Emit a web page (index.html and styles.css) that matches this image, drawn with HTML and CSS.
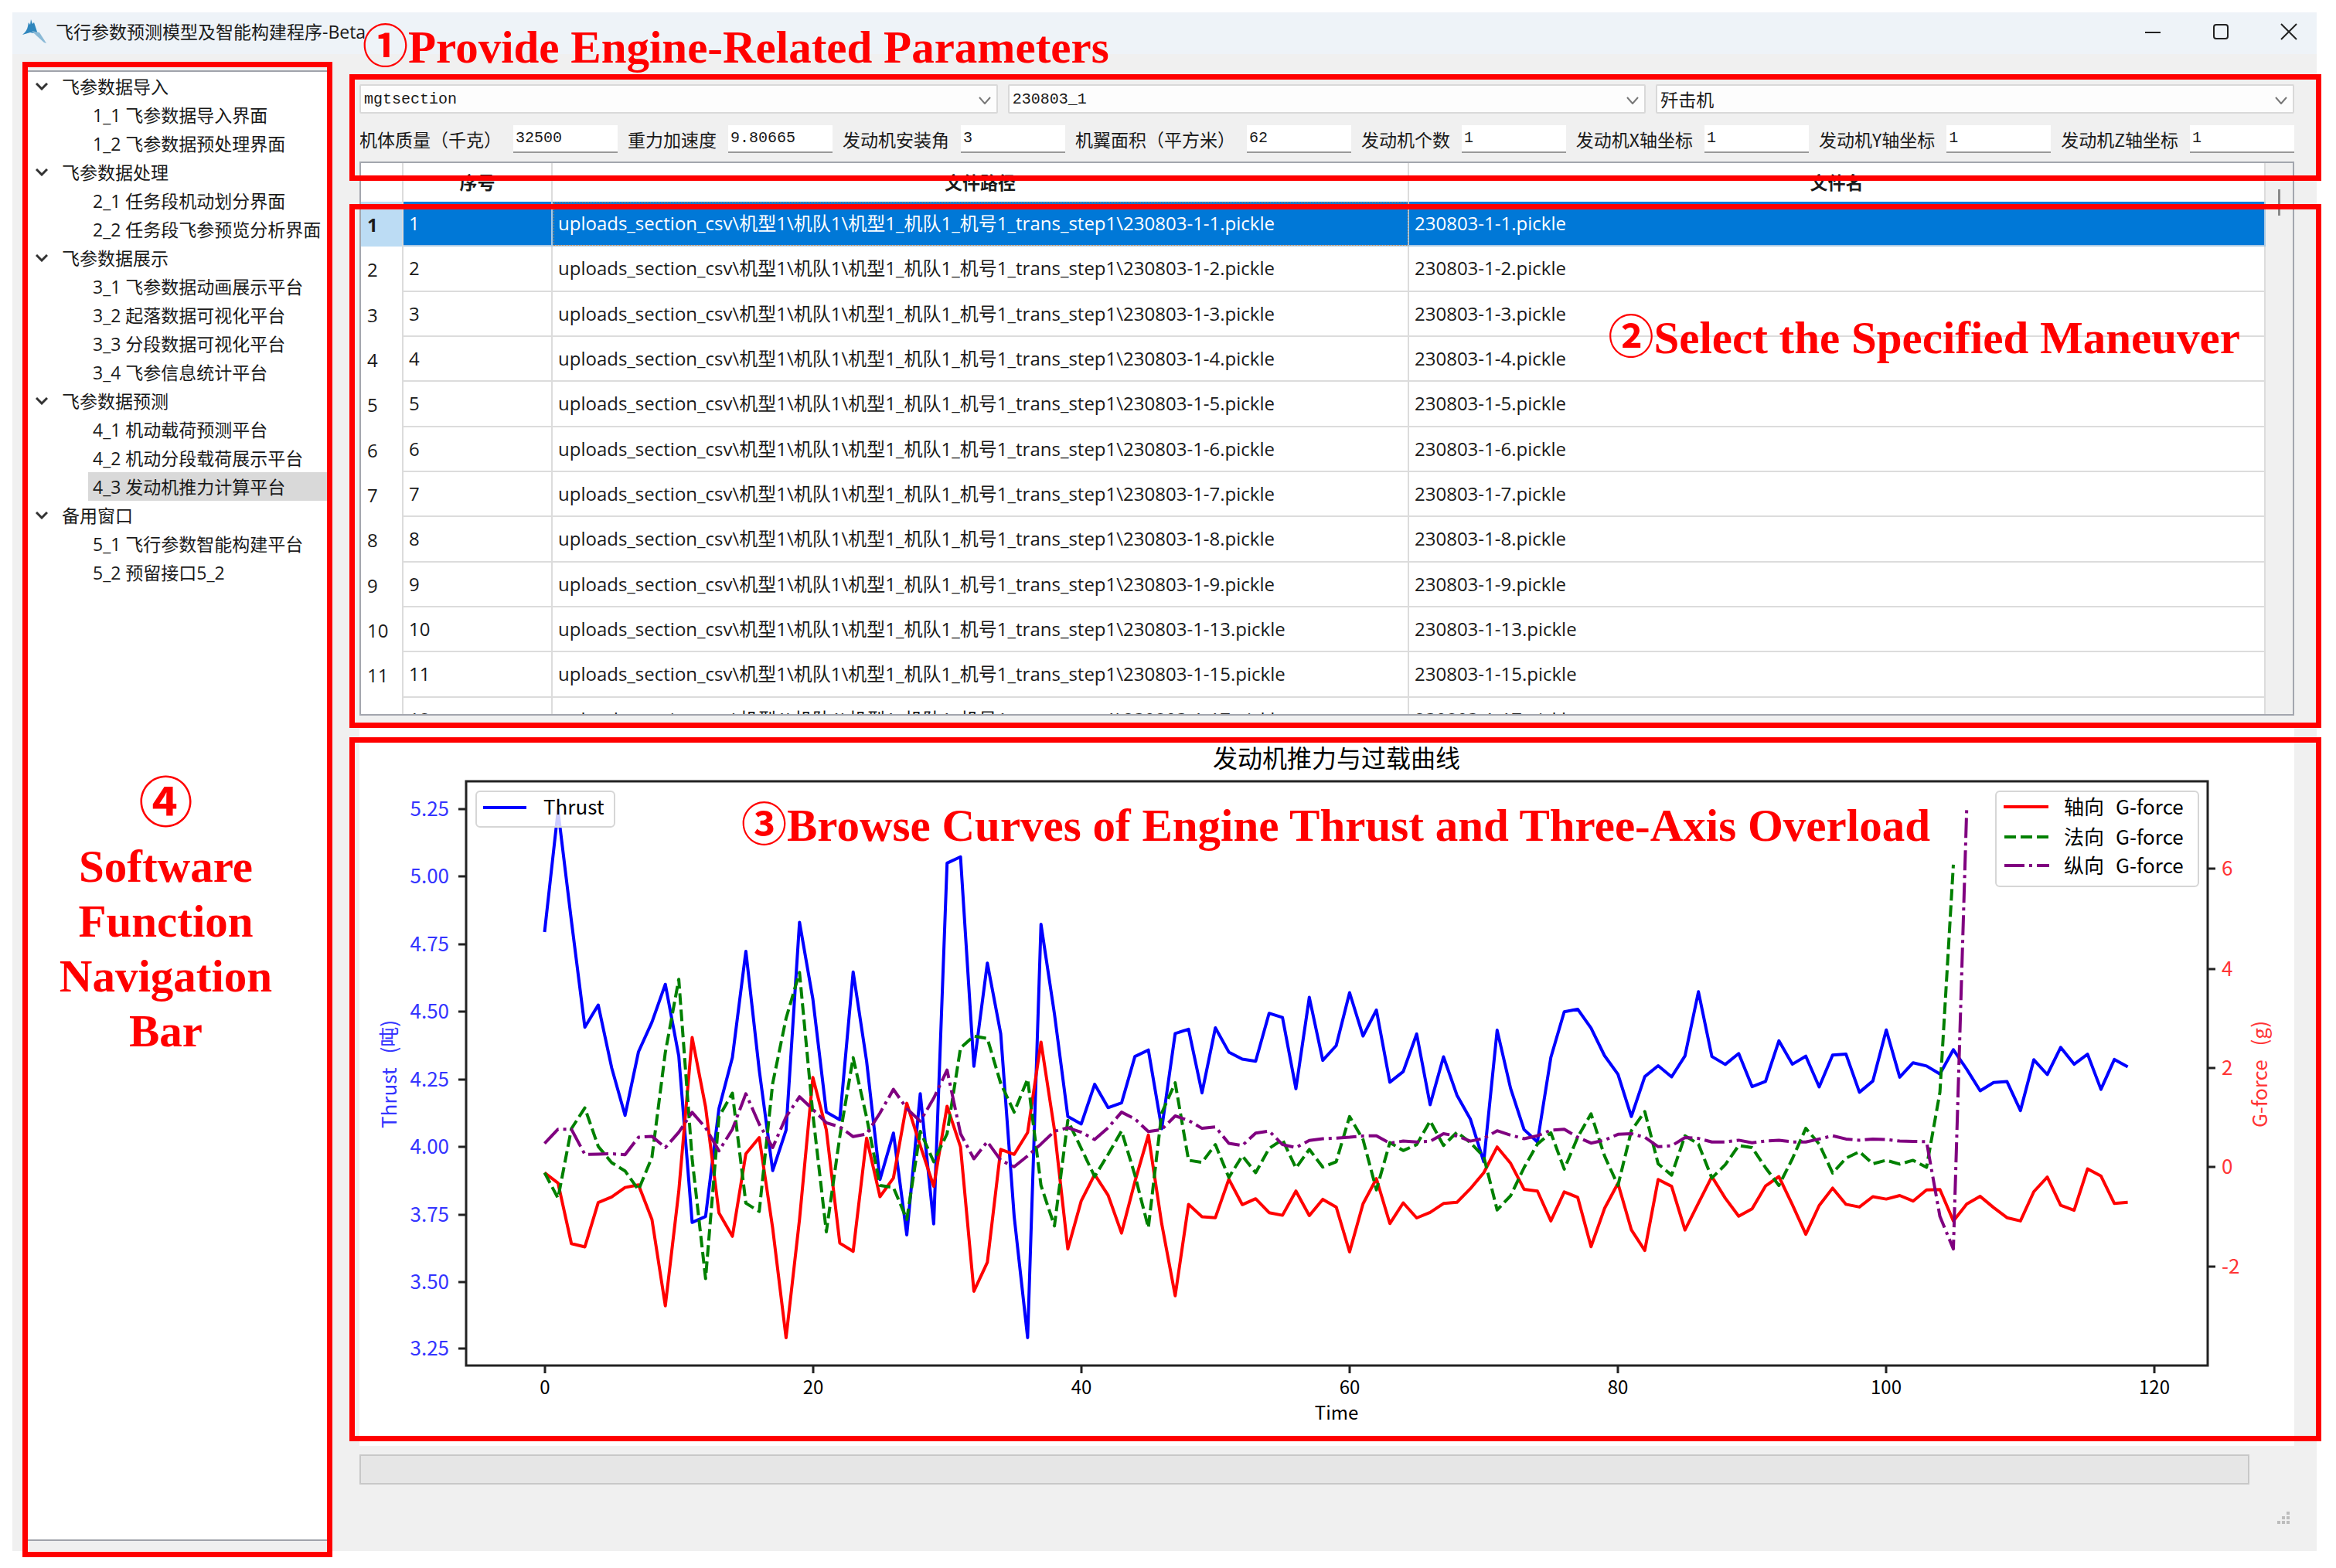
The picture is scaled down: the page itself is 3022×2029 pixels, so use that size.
FILE: index.html
```html
<!DOCTYPE html>
<html lang="zh-CN">
<head>
<meta charset="utf-8">
<title>飞行参数预测模型及智能构建程序-Beta</title>
<link rel="stylesheet" href="styles.css">
</head>
<body>
<div class="window">
  <header class="titlebar">
    <svg class="app-icon" viewBox="0 0 32 32" aria-hidden="true">
      <path d="M11 0 L13 6 L15 4 L17 10 L20 19 L10 17 L0 20 Q6 15 7 9 L8 4 L10 7 Z" fill="#2f86bd"/>
      <path d="M12 15 L22 17 L31 31 L28 30 L18 21 Z" fill="#8ab9d6"/>
    </svg>
    <h1 class="title">飞行参数预测模型及智能构建程序-Beta</h1>
    <div class="window-controls">
      <button class="window-button" type="button" aria-label="最小化"><svg viewBox="0 0 22 22"><path d="M1 12H21"/></svg></button>
      <button class="window-button" type="button" aria-label="最大化"><svg viewBox="0 0 22 22"><rect x="2" y="2" width="18" height="18" rx="3"/></svg></button>
      <button class="window-button" type="button" aria-label="关闭"><svg viewBox="0 0 22 22"><path d="M1 1L21 21M21 1L1 21"/></svg></button>
    </div>
  </header>

  <div class="workspace">
    <aside class="sidebar">
      <nav class="tree">
        <button class="group" type="button"><svg viewBox="0 0 16 10"><path d="M1 1L8 8L15 1"/></svg>飞参数据导入</button>
        <a class="leaf" href="#">1_1 飞参数据导入界面</a>
        <a class="leaf" href="#">1_2 飞参数据预处理界面</a>
        <button class="group" type="button"><svg viewBox="0 0 16 10"><path d="M1 1L8 8L15 1"/></svg>飞参数据处理</button>
        <a class="leaf" href="#">2_1 任务段机动划分界面</a>
        <a class="leaf" href="#">2_2 任务段飞参预览分析界面</a>
        <button class="group" type="button"><svg viewBox="0 0 16 10"><path d="M1 1L8 8L15 1"/></svg>飞参数据展示</button>
        <a class="leaf" href="#">3_1 飞参数据动画展示平台</a>
        <a class="leaf" href="#">3_2 起落数据可视化平台</a>
        <a class="leaf" href="#">3_3 分段数据可视化平台</a>
        <a class="leaf" href="#">3_4 飞参信息统计平台</a>
        <button class="group" type="button"><svg viewBox="0 0 16 10"><path d="M1 1L8 8L15 1"/></svg>飞参数据预测</button>
        <a class="leaf" href="#">4_1 机动载荷预测平台</a>
        <a class="leaf" href="#">4_2 机动分段载荷展示平台</a>
        <a class="leaf current" href="#" aria-current="page">4_3 发动机推力计算平台</a>
        <button class="group" type="button"><svg viewBox="0 0 16 10"><path d="M1 1L8 8L15 1"/></svg>备用窗口</button>
        <a class="leaf" href="#">5_1 飞行参数智能构建平台</a>
        <a class="leaf" href="#">5_2 预留接口5_2</a>
      </nav>
      <div class="mark mark-sidebar"></div>
      <p class="callout callout-sidebar"><span class="callout-number">④</span>Software<br>Function<br>Navigation<br>Bar</p>
    </aside>

    <main class="main">
      <section class="params">
        <div class="combos">
          <div class="combo"><select class="mono" aria-label="数据集"><option>mgtsection</option></select><svg viewBox="0 0 16 10"><path d="M1 1L8 9L15 1"/></svg></div>
          <div class="combo"><select class="mono" aria-label="架次"><option>230803_1</option></select><svg viewBox="0 0 16 10"><path d="M1 1L8 9L15 1"/></svg></div>
          <div class="combo"><select aria-label="机种"><option>歼击机</option></select><svg viewBox="0 0 16 10"><path d="M1 1L8 9L15 1"/></svg></div>
        </div>
        <div class="fields">
          <label for="mass">机体质量（千克）</label><input id="mass" value="32500">
          <label for="gravity">重力加速度</label><input id="gravity" value="9.80665">
          <label for="angle">发动机安装角</label><input id="angle" value="3">
          <label for="area">机翼面积（平方米）</label><input id="area" value="62">
          <label for="count">发动机个数</label><input id="count" value="1">
          <label for="axis-x">发动机X轴坐标</label><input id="axis-x" value="1">
          <label for="axis-y">发动机Y轴坐标</label><input id="axis-y" value="1">
          <label for="axis-z">发动机Z轴坐标</label><input id="axis-z" value="1">
        </div>
        <div class="mark mark-params"></div>
        <p class="callout callout-params">①Provide Engine-Related Parameters</p>
      </section>

      <section class="files">
        <div class="files-frame">
          <div class="files-view">
            <table>
              <colgroup><col class="col-row"><col class="col-index"><col><col></colgroup>
              <thead><tr><th></th><th>序号</th><th>文件路径</th><th>文件名</th></tr></thead>
              <tbody>
                <tr class="selected"><th>1</th><td>1</td><td class="focused">uploads_section_csv\机型1\机队1\机型1_机队1_机号1_trans_step1\230803-1-1.pickle</td><td>230803-1-1.pickle</td></tr>
                <tr><th>2</th><td>2</td><td>uploads_section_csv\机型1\机队1\机型1_机队1_机号1_trans_step1\230803-1-2.pickle</td><td>230803-1-2.pickle</td></tr>
                <tr><th>3</th><td>3</td><td>uploads_section_csv\机型1\机队1\机型1_机队1_机号1_trans_step1\230803-1-3.pickle</td><td>230803-1-3.pickle</td></tr>
                <tr><th>4</th><td>4</td><td>uploads_section_csv\机型1\机队1\机型1_机队1_机号1_trans_step1\230803-1-4.pickle</td><td>230803-1-4.pickle</td></tr>
                <tr><th>5</th><td>5</td><td>uploads_section_csv\机型1\机队1\机型1_机队1_机号1_trans_step1\230803-1-5.pickle</td><td>230803-1-5.pickle</td></tr>
                <tr><th>6</th><td>6</td><td>uploads_section_csv\机型1\机队1\机型1_机队1_机号1_trans_step1\230803-1-6.pickle</td><td>230803-1-6.pickle</td></tr>
                <tr><th>7</th><td>7</td><td>uploads_section_csv\机型1\机队1\机型1_机队1_机号1_trans_step1\230803-1-7.pickle</td><td>230803-1-7.pickle</td></tr>
                <tr><th>8</th><td>8</td><td>uploads_section_csv\机型1\机队1\机型1_机队1_机号1_trans_step1\230803-1-8.pickle</td><td>230803-1-8.pickle</td></tr>
                <tr><th>9</th><td>9</td><td>uploads_section_csv\机型1\机队1\机型1_机队1_机号1_trans_step1\230803-1-9.pickle</td><td>230803-1-9.pickle</td></tr>
                <tr><th>10</th><td>10</td><td>uploads_section_csv\机型1\机队1\机型1_机队1_机号1_trans_step1\230803-1-13.pickle</td><td>230803-1-13.pickle</td></tr>
                <tr><th>11</th><td>11</td><td>uploads_section_csv\机型1\机队1\机型1_机队1_机号1_trans_step1\230803-1-15.pickle</td><td>230803-1-15.pickle</td></tr>
                <tr><th>12</th><td>12</td><td>uploads_section_csv\机型1\机队1\机型1_机队1_机号1_trans_step1\230803-1-17.pickle</td><td>230803-1-17.pickle</td></tr>
              </tbody>
            </table>
          </div>
          <div class="scrollbar"><div class="thumb"></div></div>
        </div>
        <div class="mark mark-files"></div>
        <p class="callout callout-files">②Select the Specified Maneuver</p>
      </section>

      <section class="chart">
        <svg class="plot" viewBox="0 0 2503 929" role="img" aria-label="发动机推力与过载曲线">
          <text class="plot-title" x="1264" y="51">发动机推力与过载曲线</text>
          <g id="thrust-series"></g>
          <g class="legend">
            <rect x="151" y="82" width="179" height="46" rx="5"/>
            <path class="thrust" d="M160 103H216"/>
            <text x="238" y="112">Thrust</text>
          </g>
          <g id="force-series"></g>
          <g class="axes">
            <rect x="138" y="69" width="2253" height="756"/>
            <path d="M128 105H138M128 192H138M128 280H138M128 367H138M128 455H138M128 542H138M128 630H138M128 717H138M128 803H138"/>
            <path d="M2391 182H2401M2391 312H2401M2391 440H2401M2391 568H2401M2391 697H2401"/>
            <path d="M240 825V835M587 825V835M934 825V835M1281 825V835M1628 825V835M1975 825V835M2322 825V835"/>
          </g>
          <g class="ticks-left">
            <text x="116" y="114">5.25</text><text x="116" y="201">5.00</text><text x="116" y="289">4.75</text>
            <text x="116" y="376">4.50</text><text x="116" y="464">4.25</text><text x="116" y="551">4.00</text>
            <text x="116" y="639">3.75</text><text x="116" y="726">3.50</text><text x="116" y="812">3.25</text>
            <text class="axis-name" transform="translate(48 448) rotate(-90)">Thrust <tspan dx="12">(吨)</tspan></text>
          </g>
          <g class="ticks-right">
            <text x="2409" y="191">6</text><text x="2409" y="321">4</text><text x="2409" y="449">2</text>
            <text x="2409" y="577">0</text><text x="2409" y="706">-2</text>
            <text class="axis-name" transform="translate(2468 448) rotate(-90)">G-force <tspan dx="12">(g)</tspan></text>
          </g>
          <g class="ticks-bottom">
            <text x="240" y="862">0</text><text x="587" y="862">20</text><text x="934" y="862">40</text><text x="1281" y="862">60</text>
            <text x="1628" y="862">80</text><text x="1975" y="862">100</text><text x="2322" y="862">120</text>
            <text x="1264" y="895">Time</text>
          </g>
          <g class="legend">
            <rect x="2117" y="82" width="262" height="123" rx="5"/>
            <path class="axial" d="M2127 102H2185"/>
            <path class="normal" d="M2128 141H2186"/>
            <path class="lateral" d="M2128 178H2186"/>
            <text x="2205" y="112">轴向 <tspan x="2272">G-force</tspan></text>
            <text x="2205" y="151">法向 <tspan x="2272">G-force</tspan></text>
            <text x="2205" y="188">纵向 <tspan x="2272">G-force</tspan></text>
          </g>
        </svg>
        <div class="mark mark-chart"></div>
        <p class="callout callout-chart">③Browse Curves of Engine Thrust and Three-Axis Overload</p>
      </section>

      <div class="progress" role="progressbar" aria-label="进度" aria-valuenow="0"></div>
      <svg class="grip" viewBox="0 0 16 16" aria-hidden="true"><path d="M12 0h4v4h-4zM6 6h4v4h-4zM12 6h4v4h-4zM0 12h4v4h-4zM6 12h4v4h-4zM12 12h4v4h-4z"/></svg>
    </main>
  </div>
</div>
<script src="chart.js"></script>
</body>
</html>
```

FILE: styles.css
```css
* { box-sizing: border-box; }

body {
  margin: 0;
  padding: 16px 25px 22px 16px;
  background: #fff;
  color: #1a1a1a;
  font: 23px/36px "Open Sans", "Noto Sans CJK SC", sans-serif;
}

h1, p { margin: 0; }

button, input, select { font: inherit; color: inherit; }

.window { background: #f0f0f0; }

/* Title bar */
.titlebar {
  display: flex;
  align-items: center;
  height: 54px;
  padding: 0 14px 4px 13px;
  background: #eef3f8;
}
.app-icon { width: 32px; height: 32px; }
.title { margin-left: 11px; font-size: 23px; font-weight: 400; }
.window-controls { display: flex; gap: 44px; margin-left: auto; }
.window-button {
  display: grid;
  place-items: center;
  width: 44px;
  height: 44px;
  padding: 0;
  border: 0;
  background: none;
}
.window-button svg { width: 22px; height: 22px; fill: none; stroke: #222; stroke-width: 2; }

.workspace {
  display: grid;
  grid-template-columns: 401px minmax(0, 1fr);
  gap: 35px;
  padding: 21px 29px 13px 13px;
}

/* Navigation tree */
.sidebar { position: relative; padding: 0 4px; }
.tree {
  height: 100%;
  border: solid #a0a3ab;
  border-width: 2px 0;
  background: #fff;
}
.group, .leaf {
  display: flex;
  align-items: center;
  height: 37px;
  color: inherit;
  text-decoration: none;
  white-space: nowrap;
}
.group { gap: 18px; width: 100%; padding: 0 0 0 13px; border: 0; background: none; }
.group svg { width: 16px; height: 10px; fill: none; stroke: #333; stroke-width: 3; }
.leaf { margin-left: 81px; padding-left: 6px; }
.current { background: #d9d9d9; }

.main { display: flex; flex-direction: column; padding-top: 18px; }

/* Parameters */
.params { position: relative; display: grid; gap: 15px; margin-bottom: 11px; }
.combos { display: grid; grid-template-columns: repeat(3, minmax(0, 1fr)); gap: 13px; }
.combo { position: relative; display: flex; }
.combo select {
  width: 100%;
  height: 38px;
  padding: 0 4px;
  border: 2px solid #d9d9d9;
  border-radius: 2px;
  background: #fdfdfd;
  appearance: none;
}
.combo svg {
  position: absolute;
  top: 16px;
  right: 9px;
  width: 16px;
  height: 10px;
  fill: none;
  stroke: #777;
  stroke-width: 2;
}
.combo .mono, .fields input { font-family: "Liberation Mono", monospace; font-size: 20px; }
.fields { display: flex; align-items: center; gap: 13px; }
.fields label { padding-right: 2px; font-family: "Noto Sans CJK SC", sans-serif; white-space: nowrap; }
.fields input {
  flex: 1;
  width: 0;
  min-width: 0;
  height: 36px;
  padding: 0 3px;
  border: 0;
  border-bottom: 2px solid #999;
  background: #fff;
}

/* File table */
.files { position: relative; margin-bottom: 16px; }
.files-frame {
  display: flex;
  height: 717px;
  overflow: hidden;
  border: 2px solid #a3a6ae;
  background: #fff;
}
.files-view { flex: 1; min-width: 0; overflow: hidden; }
table {
  width: 100%;
  height: 750px;
  border-spacing: 0;
  table-layout: fixed;
  font-size: 24px;
}
.col-row { width: 55px; }
.col-index { width: 193px; }
th, td { padding: 0; border: 0 solid #dcdcdc; text-align: left; white-space: nowrap; }
thead th { height: 50px; border-right-width: 2px; font-size: 23px; text-align: center; }
tbody th { padding: 2px 0 0 8px; border-right-width: 2px; font-weight: 400; }
tbody td { padding-left: 7px; border-right-width: 2px; border-bottom-width: 2px; }
.selected th { background: #bcdcf4; font-weight: 700; }
.selected td { background: #0078d7; color: #fff; border-color: #a9c9e2; }
.selected .focused { outline: 1px dotted #c98b4e; outline-offset: -2px; }
.scrollbar { width: 35px; height: 100%; background: #f0f0f0; }
.thumb { width: 3px; height: 34px; margin: 34px auto 0; background: #8a8a8a; }

/* Chart */
.chart { position: relative; margin-bottom: 11px; background: #fff; }
.plot { display: block; width: 100%; height: auto; font-family: "Noto Sans CJK SC", sans-serif; font-size: 26px; }
.plot-title { font-size: 32px; text-anchor: middle; }
.axes { fill: none; stroke: #222; stroke-width: 3; }
.ticks-left { fill: #3434ff; text-anchor: end; }
.ticks-right { fill: #ff3434; }
.ticks-bottom { font-size: 24px; text-anchor: middle; }
.axis-name { text-anchor: middle; }
.thrust, .axial, .normal, .lateral { fill: none; stroke-width: 4; stroke-linejoin: round; }
.thrust { stroke: #00f; }
.axial { stroke: #f00; }
.normal { stroke: #008000; stroke-dasharray: 15 6; }
.lateral { stroke: #800080; stroke-dasharray: 26 6 4 6; }
.legend rect { fill: #fff; fill-opacity: .8; stroke: #d6d6d6; stroke-width: 2; }

/* Footer */
.progress { height: 39px; margin-right: 58px; border: 2px solid #c8c8c8; background: #e6e6e6; }
.grip { width: 16px; height: 16px; margin: 35px 6px 22px auto; fill: #bdbdbd; }

/* Red guide frames and captions */
.mark { position: absolute; border: 7px solid #f00; pointer-events: none; }
.mark-sidebar { inset: -11px 0 -21px; }
.mark-params { inset: -13px -35px -36px -13px; z-index: 1; }
.mark-files { inset: 55px -35px -16px -13px; }
.mark-chart { inset: 12px -35px 6px -13px; }
.callout {
  position: absolute;
  color: #f00;
  font: 700 59px/71px "Liberation Serif", "Noto Sans CJK SC", serif;
  white-space: nowrap;
  pointer-events: none;
}
.callout-params { top: -83px; left: 4px; }
.callout-files { top: 193px; right: 70px; }
.callout-chart { top: 91px; left: 494px; }
.callout-sidebar { top: 905px; left: 0; right: 30px; text-align: center; }
.callout-number { display: block; font-size: 70px; line-height: 90px; }
```

FILE: chart.js
```js
// One sample per time step; values are plot ordinates in fine units, growing downwards.
const thrust = [
  68, -342, 30, 390, 315, 527, 688, 473, 373, 245, 487, 1050, 1030, 665, 492, 133, 535, 875, 738, 35,
  295, 677, 703, 203, 505, 905, 748, 1092, 615, 1055, -165, -186, 522, 173, 412, 1030, 1440, 42, 345, 692,
  717, 583, 662, 646, 489, 467, 733, 411, 397, 612, 392, 474, 498, 505, 343, 357, 598, 289, 502, 452,
  273, 420, 332, 576, 540, 413, 652, 490, 620, 700, 845, 400, 597, 736, 778, 492, 338, 329, 393, 486,
  549, 692, 557, 520, 558, 487, 270, 489, 516, 479, 591, 573, 436, 515, 488, 592, 484, 481, 610, 572,
  399, 559, 510, 521, 548, 466, 532, 605, 577, 574, 672, 500, 550, 458, 515, 481, 600, 499, 524
];
const axial = [
  882, 917, 1122, 1133, 983, 964, 932, 923, 1040, 1332, 945, 425, 660, 1018, 1097, 818, 763, 1070, 1440, 1040,
  560, 737, 1120, 1148, 765, 963, 900, 647, 790, 928, 657, 795, 1283, 1185, 803, 820, 746, 440, 737, 1140,
  977, 888, 958, 1086, 912, 755, 1055, 1298, 989, 1031, 1034, 904, 990, 970, 1017, 1026, 944, 1027, 972, 998,
  1150, 987, 902, 1054, 984, 1035, 1016, 986, 982, 936, 882, 795, 850, 938, 944, 1045, 947, 965, 1132, 1003,
  918, 1075, 1145, 905, 928, 1076, 985, 895, 968, 1029, 1004, 927, 895, 990, 1090, 993, 934, 989, 998, 963,
  971, 959, 978, 940, 939, 1045, 988, 962, 1000, 1034, 1045, 946, 897, 992, 1009, 869, 893, 986, 982
];
const normal = [
  882, 968, 733, 663, 793, 848, 876, 940, 830, 475, 228, 835, 1240, 693, 613, 985, 1013, 580, 360, 205,
  685, 1082, 760, 493, 695, 925, 932, 1040, 742, 845, 750, 460, 420, 428, 580, 677, 565, 925, 1062, 705,
  800, 895, 820, 741, 890, 1068, 680, 578, 840, 847, 787, 898, 825, 882, 800, 770, 866, 803, 863, 845,
  692, 770, 940, 780, 807, 787, 707, 790, 745, 780, 828, 1008, 960, 865, 785, 747, 870, 762, 683, 825,
  925, 740, 675, 852, 890, 757, 785, 900, 855, 790, 797, 865, 925, 835, 732, 785, 883, 833, 811, 852,
  840, 853, 840, 864, 610, -160
];
const lateral = [
  783, 735, 735, 820, 819, 818, 821, 762, 759, 797, 745, 678, 730, 808, 735, 615, 718, 797, 693, 625,
  668, 713, 727, 760, 751, 680, 600, 665, 708, 630, 535, 750, 835, 777, 840, 862, 825, 785, 742, 730,
  745, 770, 730, 677, 700, 743, 736, 690, 705, 732, 727, 783, 790, 748, 741, 787, 797, 773, 767, 765,
  762, 758, 757, 782, 775, 778, 776, 750, 758, 775, 766, 740, 755, 767, 757, 738, 735, 762, 782, 772,
  752, 750, 762, 794, 791, 763, 766, 778, 778, 772, 781, 775, 772, 778, 778, 768, 757, 768, 772, 768,
  770, 775, 776, 777, 1030, 1140, -353
];

const STEP = 17.357;   // horizontal distance between samples
const START = 239.5;   // position of time 0
const BASE = 238;      // position of ordinate 0
const UNIT = 0.38265;  // height of one ordinate unit

function draw(groupId, className, values) {
  const line = document.createElementNS("http://www.w3.org/2000/svg", "polyline");
  const points = values.map((v, i) => `${(START + i * STEP).toFixed(1)},${(BASE + v * UNIT).toFixed(1)}`);
  line.setAttribute("class", className);
  line.setAttribute("points", points.join(" "));
  document.getElementById(groupId).append(line);
}

draw("thrust-series", "thrust", thrust);
draw("force-series", "axial", axial);
draw("force-series", "normal", normal);
draw("force-series", "lateral", lateral);
```
